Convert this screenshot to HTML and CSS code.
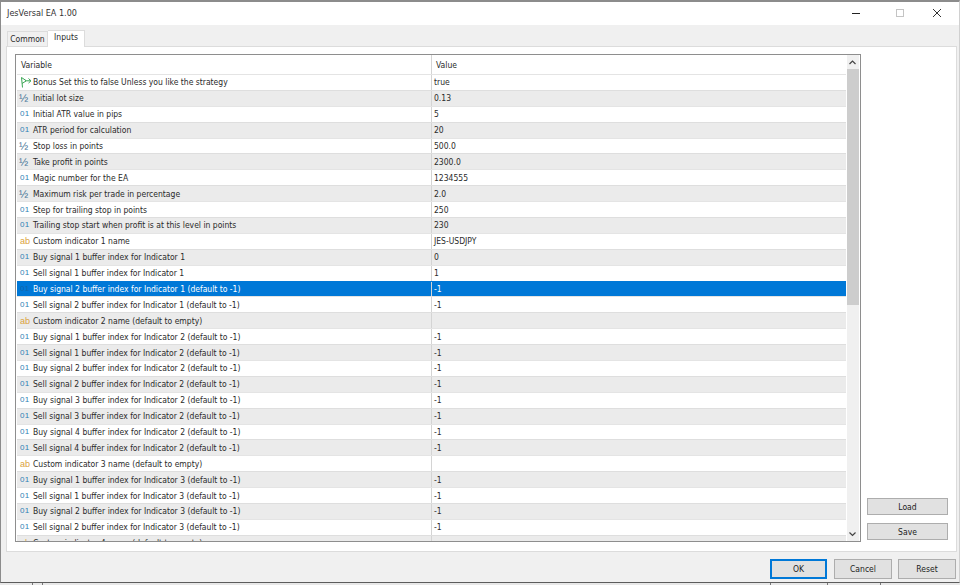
FILE: index.html
```html
<!DOCTYPE html>
<html lang="en">
<head>
<meta charset="utf-8">
<title>JesVersal EA 1.00</title>
<link rel="stylesheet" href="styles.css">
</head>
<body>
<div class="window">
  <header class="titlebar">
    <span class="title">JesVersal EA 1.00</span>
    <div class="controls">
      <svg class="ctl" width="46" height="14" viewBox="0 0 46 14"><path d="M9 7.500h8" stroke="#222" stroke-width="1"/></svg>
      <svg class="ctl" width="36" height="14" viewBox="0 0 36 14"><rect x="7.500" y="3.500" width="7" height="7" fill="none" stroke="#c4c4c4"/></svg>
      <svg class="ctl" width="34" height="14" viewBox="0 0 34 14"><path d="M8 3l8 8M16 3l-8 8" stroke="#333" stroke-width="1" fill="none"/></svg>
    </div>
  </header>
  <nav class="tabs">
    <span class="tab">Common</span>
    <span class="tab active">Inputs</span>
  </nav>
  <main class="panel">
    <section class="list">
      <div class="grid">
        <div class="head"><span class="c1">Variable</span><span class="c2">Value</span></div>
        <div class="rows">
          <div class="row"><span class="c1"><svg class="ico" width="14" height="12" viewBox="0 0 14 12"><path d="M3.500 11.500L2.500 1.500M2.500 1.500L7 4.500M3 7.500L7 5M6 4.800h5.500M9.500 2.500l2.500 2.300-2.500 2.300" fill="none" stroke="#3aa655" stroke-width="1"/></svg>Bonus Set this to false Unless you like the strategy</span><span class="c2">true</span></div>
          <div class="row"><span class="c1"><i class="ico half">½</i>Initial lot size</span><span class="c2">0.13</span></div>
          <div class="row"><span class="c1"><i class="ico int">01</i>Initial ATR value in pips</span><span class="c2">5</span></div>
          <div class="row"><span class="c1"><i class="ico int">01</i>ATR period for calculation</span><span class="c2">20</span></div>
          <div class="row"><span class="c1"><i class="ico half">½</i>Stop loss in points</span><span class="c2">500.0</span></div>
          <div class="row"><span class="c1"><i class="ico half">½</i>Take profit in points</span><span class="c2">2300.0</span></div>
          <div class="row"><span class="c1"><i class="ico int">01</i>Magic number for the EA</span><span class="c2">1234555</span></div>
          <div class="row"><span class="c1"><i class="ico half">½</i>Maximum risk per trade in percentage</span><span class="c2">2.0</span></div>
          <div class="row"><span class="c1"><i class="ico int">01</i>Step for trailing stop in points</span><span class="c2">250</span></div>
          <div class="row"><span class="c1"><i class="ico int">01</i>Trailing stop start when profit is at this level in points</span><span class="c2">230</span></div>
          <div class="row"><span class="c1"><i class="ico str">ab</i>Custom indicator 1 name</span><span class="c2">JES-USDJPY</span></div>
          <div class="row"><span class="c1"><i class="ico int">01</i>Buy signal 1 buffer index for Indicator 1</span><span class="c2">0</span></div>
          <div class="row"><span class="c1"><i class="ico int">01</i>Sell signal 1 buffer index for Indicator 1</span><span class="c2">1</span></div>
          <div class="row selected"><span class="c1"><i class="ico int">01</i>Buy signal 2 buffer index for Indicator 1 (default to -1)</span><span class="c2">-1</span></div>
          <div class="row"><span class="c1"><i class="ico int">01</i>Sell signal 2 buffer index for Indicator 1 (default to -1)</span><span class="c2">-1</span></div>
          <div class="row"><span class="c1"><i class="ico str">ab</i>Custom indicator 2 name (default to empty)</span><span class="c2"></span></div>
          <div class="row"><span class="c1"><i class="ico int">01</i>Buy signal 1 buffer index for Indicator 2 (default to -1)</span><span class="c2">-1</span></div>
          <div class="row"><span class="c1"><i class="ico int">01</i>Sell signal 1 buffer index for Indicator 2 (default to -1)</span><span class="c2">-1</span></div>
          <div class="row"><span class="c1"><i class="ico int">01</i>Buy signal 2 buffer index for Indicator 2 (default to -1)</span><span class="c2">-1</span></div>
          <div class="row"><span class="c1"><i class="ico int">01</i>Sell signal 2 buffer index for Indicator 2 (default to -1)</span><span class="c2">-1</span></div>
          <div class="row"><span class="c1"><i class="ico int">01</i>Buy signal 3 buffer index for Indicator 2 (default to -1)</span><span class="c2">-1</span></div>
          <div class="row"><span class="c1"><i class="ico int">01</i>Sell signal 3 buffer index for Indicator 2 (default to -1)</span><span class="c2">-1</span></div>
          <div class="row"><span class="c1"><i class="ico int">01</i>Buy signal 4 buffer index for Indicator 2 (default to -1)</span><span class="c2">-1</span></div>
          <div class="row"><span class="c1"><i class="ico int">01</i>Sell signal 4 buffer index for Indicator 2 (default to -1)</span><span class="c2">-1</span></div>
          <div class="row"><span class="c1"><i class="ico str">ab</i>Custom indicator 3 name (default to empty)</span><span class="c2"></span></div>
          <div class="row"><span class="c1"><i class="ico int">01</i>Buy signal 1 buffer index for Indicator 3 (default to -1)</span><span class="c2">-1</span></div>
          <div class="row"><span class="c1"><i class="ico int">01</i>Sell signal 1 buffer index for Indicator 3 (default to -1)</span><span class="c2">-1</span></div>
          <div class="row"><span class="c1"><i class="ico int">01</i>Buy signal 2 buffer index for Indicator 3 (default to -1)</span><span class="c2">-1</span></div>
          <div class="row"><span class="c1"><i class="ico int">01</i>Sell signal 2 buffer index for Indicator 3 (default to -1)</span><span class="c2">-1</span></div>
          <div class="row"><span class="c1"><i class="ico str">ab</i>Custom indicator 4 name (default to empty)</span><span class="c2"></span></div>
        </div>
      </div>
      <div class="scrollbar">
        <svg class="arrow" width="11" height="14" viewBox="0 0 11 14"><path d="M2.500 9l3-3 3 3" fill="none" stroke="#444" stroke-width="1.200"/></svg>
        <div class="thumb"></div>
        <div class="track"></div>
        <svg class="arrow" width="11" height="14" viewBox="0 0 11 14"><path d="M2.500 5.500l3 3 3-3" fill="none" stroke="#444" stroke-width="1.200"/></svg>
      </div>
    </section>
    <aside class="side">
      <button class="btn side-btn">Load</button>
      <button class="btn side-btn">Save</button>
    </aside>
  </main>
  <footer class="footer">
    <button class="btn foot-btn default">OK</button>
    <button class="btn foot-btn">Cancel</button>
    <button class="btn foot-btn">Reset</button>
  </footer>
</div>
<div class="under">
  <span class="tick t1"></span><span class="tick t2"></span><span class="tick t3"></span><span class="tick t4"></span><span class="tick t5"></span>
</div>
</body>
</html>
```
FILE: styles.css
```css
* { box-sizing: border-box; }
html, body { margin: 0; padding: 0; }
body {
  width: 960px;
  height: 585px;
  overflow: hidden;
  background: #e8e8e8;
  font-family: "DejaVu Sans", "Liberation Sans", sans-serif;
  font-stretch: condensed;
  font-size: 8.5px;
  color: #2a2a2a;
  display: flex;
  flex-direction: column;
}
.window {
  width: 960px;
  height: 583px;
  border: 1px solid #8c8c8c;
  border-top: 2px solid #8c8c8c;
  border-bottom: 1px solid #5c5c5c;
  border-right-color: #d0d0d0;
  background: #f0f0f0;
  display: flex;
  flex-direction: column;
}
.titlebar {
  height: 23px;
  background: #fff;
  display: flex;
  align-items: center;
  justify-content: space-between;
  padding-left: 6px;
  padding-bottom: 1px;
  flex: none;
}
.title { font-size: 9px; color: #333; }
.controls { display: flex; align-items: center; }
.ctl { display: block; }
.tabs {
  height: 21px;
  flex: none;
  display: flex;
  align-items: flex-end;
  padding-left: 6px;
  position: relative;
}
.tab {
  height: 15px;
  width: 41px;
  background: #f0f0f0;
  border: 1px solid #dcdcdc;
  border-bottom: none;
  text-align: center;
  line-height: 14px;
}
.tab.active {
  height: 17px;
  width: 37px;
  background: #fff;
  border-left: none;
  margin-bottom: -1px;
  position: relative;
  z-index: 1;
  line-height: 13px;
}
.panel {
  height: 506px;
  flex: none;
  margin: 0 2px 0 5px;
  background: #fff;
  border: 1px solid #dcdcdc;
  padding: 7px 0 9px 8px;
  display: flex;
}
.list {
  width: 846px;
  height: 488px;
  border: 1px solid #8e8e8e;
  display: flex;
  background: #fff;
  flex: none;
}
.grid { width: 829px; margin-left: 1px; display: flex; flex-direction: column; overflow: hidden; }
.head { height: 19px; flex: none; display: flex; align-items: center; }
.rows { overflow: hidden; flex: 1; }
.row {
  height: 15.9px;
  display: flex;
  align-items: center;
  border-top: 1px solid #e4e4e4;
  line-height: 14px;
  white-space: nowrap;
}
.row:nth-child(even) { background: #ebebeb; border-top-color: #dedede; }
.row.selected { background: #0078d7; color: #fff; border-top-color: #0078d7; }
.c1 { width: 414px; display: flex; align-items: center; padding-left: 2px; flex: none; }
.c2 { flex: 1; height: 100%; border-left: 1px solid #d4d4d4; padding-left: 2px; display: flex; align-items: center; }
.head .c1 { padding-left: 4px; }
.head .c2 { padding-left: 4px; }
.ico {
  width: 14px;
  flex: none;
  display: block;
  font-style: normal;
  line-height: 12px;
  text-align: left;
  font-family: "Liberation Sans", sans-serif;
  font-stretch: normal;
}
.int { color: #2f7fb5; font-size: 8px; letter-spacing: 0.3px; padding-left: 1px; }
.half { color: #3f7296; font-size: 11px; }
.str { color: #dba23e; font-size: 9px; padding-left: 1px; }
.row.selected .int { color: #1565a8; }
.scrollbar {
  width: 12px;
  margin-left: 1px;
  flex: none;
  background: #f0f0f0;
  display: flex;
  flex-direction: column;
}
.arrow { display: block; flex: none; }
.thumb { height: 236px; background: #cdcdcd; flex: none; }
.track { flex: 1; }
.side {
  margin-left: 6px;
  padding-bottom: 2px;
  width: 81px;
  display: flex;
  flex-direction: column;
  justify-content: flex-end;
  gap: 8px;
}
.btn {
  font-family: inherit;
  font-stretch: condensed;
  font-size: 8.5px;
  color: #222;
  background: #e1e1e1;
  border: 1px solid #adadad;
  padding: 0;
}
.side-btn { height: 17px; }
.footer {
  flex: 1;
  display: flex;
  align-items: flex-start;
  justify-content: flex-end;
  padding: 7px 3px 0 0;
  gap: 6px;
}
.foot-btn { width: 58px; height: 20px; }
.foot-btn.default { width: 57px; border: 2px solid #0078d7; margin-right: 1px; }
.under {
  height: 2px;
  flex: none;
  display: flex;
  position: relative;
}
.tick { position: absolute; top: 0; width: 1px; height: 2px; background: #777; }
.t1 { left: 32px; }
.t2 { left: 42px; }
.t3 { left: 770px; }
.t4 { left: 827px; }
.t5 { left: 880px; }
```
